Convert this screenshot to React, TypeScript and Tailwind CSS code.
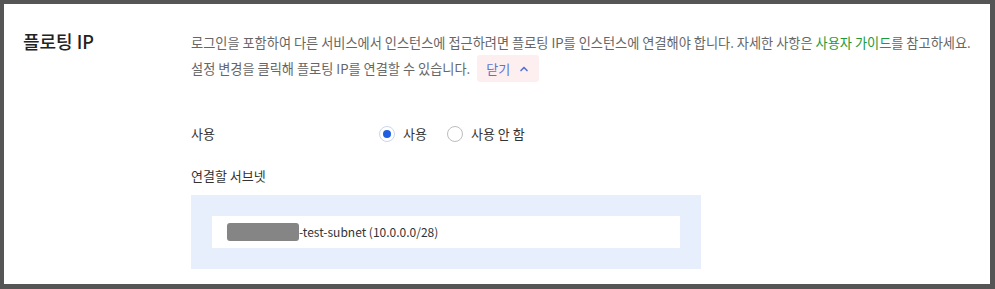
import { ChevronUp } from 'lucide-react';

const font = { fontFamily: '"Noto Sans CJK KR", "Noto Sans", sans-serif' };

function Radio({ checked, label }: { checked?: boolean; label: string }) {
  return (
    <label className="flex items-center gap-[8px] text-[13px] text-[#333]">
      <span
        className={`flex h-[16px] w-[16px] items-center justify-center rounded-full border bg-white ${
          checked ? 'border-[#cdd6e8]' : 'border-[#bdbdbd]'
        }`}
      >
        {checked && <span className="h-[8px] w-[8px] rounded-full bg-[#1f5fe0]" />}
      </span>
      {label}
    </label>
  );
}

export default function App() {
  return (
    <div
      className="box-border h-[289px] w-[995px] border-t-4 border-r-[5px] border-b-[5px] border-l-4 border-[#555] bg-white"
      style={font}
    >
      <div className="flex pt-[26px]">
        <div className="w-[187px] shrink-0 pl-[19px]">
          <h2 className="text-[18px] leading-[22px] font-medium text-[#222]">플로팅 IP</h2>
        </div>
        <div className="flex-1">
          <div className="text-[13.2px] leading-[25px] text-[#666]">
            <p>
              로그인을 포함하여 다른 서비스에서 인스턴스에 접근하려면 플로팅 IP를 인스턴스에 연결해야 합니다. 자세한 사항은{' '}
              <span className="text-[#1a9c3c]">사용자 가이드</span>를 참고하세요.
            </p>
            <p className="flex items-center">
              설정 변경을 클릭해 플로팅 IP를 연결할 수 있습니다.
              <button className="ml-[7px] flex h-[27px] items-center gap-[8px] rounded-[3px] bg-[#fdeff0] px-[9px] text-[13px] text-[#5a74d6]">
                닫기
                <ChevronUp size={12} strokeWidth={3.4} />
              </button>
            </p>
          </div>

          <div className="mt-[42px] flex items-center">
            <span className="w-[188px] text-[13px] text-[#333]">사용</span>
            <div className="flex items-center gap-[20px]">
              <Radio checked label="사용" />
              <Radio label="사용 안 함" />
            </div>
          </div>

          <div className="mt-[22px] text-[13px] text-[#333]">연결할 서브넷</div>

          <div className="mt-[10px] w-[510px] bg-[#e8effc] px-[21px] pt-[21px] pb-[21px]">
            <div className="flex h-[32px] items-center bg-white px-[15px] text-[12px] text-[#333]">
              <span className="h-[18px] w-[72px] rounded-[3px] bg-[#858585]" />
              <span>-test-subnet (10.0.0.0/28)</span>
            </div>
          </div>
        </div>
      </div>
    </div>
  );
}
